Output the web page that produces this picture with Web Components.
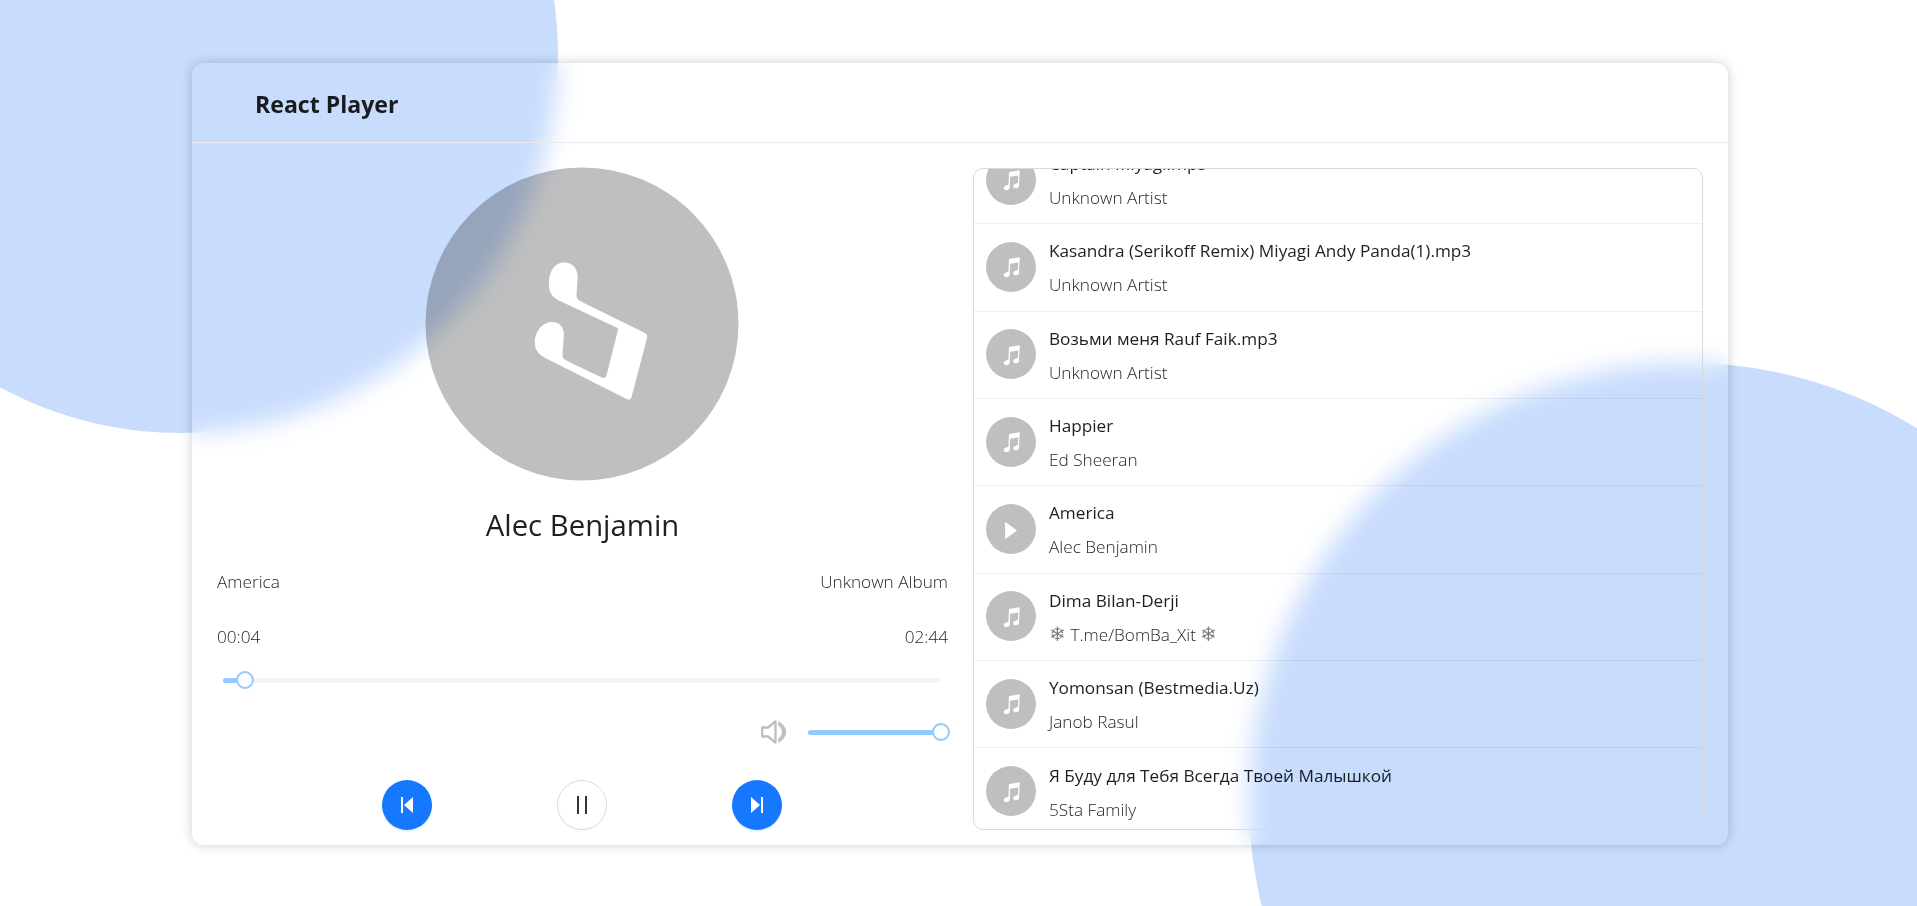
<!DOCTYPE html>
<html lang="en">
<head>
<meta charset="utf-8">
<title>React Player</title>
<style>
html, body {
  margin: 0;
  height: 100%;
  background: #fff;
}
body {
  font-family: "Open Sans", "Liberation Sans", sans-serif;
  color: rgba(0, 0, 0, 0.88);
  overflow: hidden;
}
.flake {
  opacity: 0.6;
  font-size: 1.15em;
  line-height: 0;
}
</style>
</head>
<body>
<rp-app>
  <rp-card heading="React Player">
    <rp-now-playing slot="left" artist="Alec Benjamin" song="America" album="Unknown Album" current="00:04" total="02:44"></rp-now-playing>
    <rp-playlist slot="right">
      <rp-track><span slot="title">Captain Miyagi.mp3</span><span slot="artist">Unknown Artist</span></rp-track>
      <rp-track><span slot="title">Kasandra (Serikoff Remix) Miyagi Andy Panda(1).mp3</span><span slot="artist">Unknown Artist</span></rp-track>
      <rp-track><span slot="title">Возьми меня Rauf Faik.mp3</span><span slot="artist">Unknown Artist</span></rp-track>
      <rp-track><span slot="title">Happier</span><span slot="artist">Ed Sheeran</span></rp-track>
      <rp-track playing><span slot="title">America</span><span slot="artist">Alec Benjamin</span></rp-track>
      <rp-track><span slot="title">Dima Bilan-Derji</span><span slot="artist"><span class="flake">❄</span> T.me/BomBa_Xit <span class="flake">❄</span></span></rp-track>
      <rp-track><span slot="title">Yomonsan (Bestmedia.Uz)</span><span slot="artist">Janob Rasul</span></rp-track>
      <rp-track last><span slot="title">Я Буду для Тебя Всегда Твоей Малышкой</span><span slot="artist">5Sta Family</span></rp-track>
    </rp-playlist>
  </rp-card>
</rp-app>
<script>
// the beamed note, traced from the album art at its rotated angle
const NOTE_PATH =
  "M145 130C146 90 165 68 192 68C220 68 233 90 231 118L228 165C228 174 232 180 240 184L433 279C439 282 441 287 440 292L393 472C391 479 386 481 380 478L130 352C112 342 103 328 103 308C103 275 125 246 155 246C178 246 191 262 190 285L186 345C186 353 190 358 197 362L302 412C310 416 316 414 318 407L352 272C353 267 352 265 348 263L172 180C154 171 144 155 145 130Z";

class RpApp extends HTMLElement {
  constructor() {
    super();
    this.attachShadow({ mode: "open" }).innerHTML = `
<style>
:host {
  display: block;
  position: relative;
  width: 100%;
  height: 906px;
  overflow: hidden;
  box-sizing: border-box;
  padding: 63px 189px 0 192px;
}
.blob {
  position: absolute;
  border-radius: 50%;
  background: #c8dcfd;
}
.one {
  left: -198px;
  top: -323px;
  width: 756px;
  height: 756px;
}
.two {
  left: 1249px;
  top: 363px;
  width: 876px;
  height: 876px;
}
</style>
<div class="blob one"></div>
<div class="blob two"></div>
<slot></slot>`;
  }
}
customElements.define("rp-app", RpApp);

class RpCard extends HTMLElement {
  constructor() {
    super();
    this.attachShadow({ mode: "open" }).innerHTML = `
<style>
:host {
  display: block;
  position: relative;
  height: 782px;
  border-radius: 12px;
  box-shadow: 0 0 12px rgba(0, 0, 0, 0.2);
  backdrop-filter: blur(12px);
  overflow: hidden;
}
header {
  box-sizing: border-box;
  height: 80px;
  padding: 2px 0 0 63px;
  display: flex;
  align-items: center;
  border-bottom: 1px solid #ebebeb;
  font-size: 23.1px;
  font-weight: 700;
  color: rgba(0, 0, 0, 0.88);
}
.body {
  display: grid;
  grid-template-columns: 731px 730px;
  gap: 25px;
  padding: 25px 25px 15px 25px;
}
</style>
<header>${this.getAttribute("heading")}</header>
<div class="body">
  <slot name="left"></slot>
  <slot name="right"></slot>
</div>`;
  }
}
customElements.define("rp-card", RpCard);

class RpSlider extends HTMLElement {
  constructor() {
    super();
    const value = this.getAttribute("value");
    this.attachShadow({ mode: "open" }).innerHTML = `
<style>
:host {
  display: block;
  position: relative;
  height: 18px;
}
.rail, .track {
  position: absolute;
  left: 0;
  top: 7px;
  height: 5px;
  border-radius: 3px;
}
.rail {
  width: 100%;
  background: rgba(0, 0, 0, 0.04);
}
.track {
  width: ${value}%;
  background: #91caff;
}
.handle {
  position: absolute;
  left: ${value}%;
  top: 0;
  box-sizing: border-box;
  width: 18px;
  height: 18px;
  margin-left: -9px;
  border-radius: 50%;
  border: 2.5px solid #91caff;
  background: #fff;
}
</style>
<div class="rail"></div>
<div class="track"></div>
<div class="handle"></div>`;
  }
}
customElements.define("rp-slider", RpSlider);

class RpRoundButton extends HTMLElement {
  constructor() {
    super();
    const kind = this.getAttribute("kind");
    const icons = {
      prev: `<svg width="12" height="16" viewBox="0 0 12 16"><rect x="0" y="0" width="2" height="16" fill="#fff"/><path d="M12 0V16L3 8Z" fill="#fff"/></svg>`,
      next: `<svg width="12" height="16" viewBox="0 0 12 16"><path d="M0 0V16L9 8Z" fill="#fff"/><rect x="10" y="0" width="2" height="16" fill="#fff"/></svg>`,
      pause: `<svg width="12" height="18" viewBox="0 0 12 18"><rect x="1" y="0" width="2" height="18" fill="#333"/><rect x="9" y="0" width="2" height="18" fill="#333"/></svg>`,
    };
    this.attachShadow({ mode: "open" }).innerHTML = `
<style>
:host {
  display: flex;
  align-items: center;
  justify-content: center;
  box-sizing: border-box;
  width: 50px;
  height: 50px;
  border-radius: 50%;
  background: #1677ff;
  box-shadow: 0 2px 0 rgba(5, 145, 255, 0.1);
}
:host([kind="pause"]) {
  background: #fff;
  border: 1px solid #d9d9d9;
  box-shadow: 0 2px 0 rgba(0, 0, 0, 0.02);
}
</style>
${icons[kind]}`;
  }
}
customElements.define("rp-round-button", RpRoundButton);

class RpNowPlaying extends HTMLElement {
  constructor() {
    super();
    const attr = (name) => this.getAttribute(name);
    this.attachShadow({ mode: "open" }).innerHTML = `
<style>
:host {
  display: block;
}
.album {
  width: 313px;
  height: 313px;
  margin: -1px auto 0;
  transform: translate(-0.5px, 0.4px);
  border-radius: 50%;
  background: rgba(0, 0, 0, 0.25);
}
.album svg {
  display: block;
}
h2 {
  margin: 25px 0 0;
  font-size: 29.3px;
  line-height: 40px;
  font-weight: 450;
  text-align: center;
}
.row {
  display: flex;
  justify-content: space-between;
  font-size: 17.2px;
  line-height: 24px;
  font-weight: 340;
}
.meta {
  margin-top: 25px;
}
.time {
  margin-top: 31px;
}
.progress {
  margin: 22px 7px 0 6px;
}
.volume {
  display: flex;
  align-items: center;
  justify-content: flex-end;
  gap: 21px;
  margin: 31px 7px 0 0;
}
.volume rp-slider {
  width: 133px;
}
.volume svg {
  display: block;
}
.controls {
  display: flex;
  justify-content: center;
  gap: 125px;
  margin: 36px 0 0 -1px;
}
</style>
<div class="album">
  <svg width="313" height="313" viewBox="-225 -217.5 939 939"><path d="${NOTE_PATH}" fill="#fff"/></svg>
</div>
<h2>${attr("artist")}</h2>
<div class="row meta"><span>${attr("song")}</span><span>${attr("album")}</span></div>
<div class="row time"><span>${attr("current")}</span><span>${attr("total")}</span></div>
<rp-slider class="progress" value="3.1"></rp-slider>
<div class="volume">
  <svg width="26" height="24" viewBox="0 0 26 24">
    <path d="M1.2 7.5H7L14.5 1.5V22.5L7 16.5H1.2Z" fill="none" stroke="#bfbfbf" stroke-width="2.3" stroke-linejoin="round"/>
    <path d="M17.5 1Q33 12 17.5 23L17 19Q25 12 17 5Z" fill="#bfbfbf"/>
  </svg>
  <rp-slider value="100"></rp-slider>
</div>
<div class="controls">
  <rp-round-button kind="prev"></rp-round-button>
  <rp-round-button kind="pause"></rp-round-button>
  <rp-round-button kind="next"></rp-round-button>
</div>`;
  }
}
customElements.define("rp-now-playing", RpNowPlaying);

class RpPlaylist extends HTMLElement {
  constructor() {
    super();
    this.attachShadow({ mode: "open" }).innerHTML = `
<style>
:host {
  display: block;
  box-sizing: border-box;
  height: 662px;
  border: 1px solid #d9d9d9;
  border-radius: 10px;
  overflow: hidden;
}
.inner {
  margin-top: -32px;
}
</style>
<div class="inner"><slot></slot></div>`;
  }
}
customElements.define("rp-playlist", RpPlaylist);

class RpTrack extends HTMLElement {
  constructor() {
    super();
    const icon = this.hasAttribute("playing")
      ? `<svg width="12" height="17" viewBox="0 0 12 17" style="margin-top:3px"><path d="M0.5 0.5V16.5L11.5 8.5Z" fill="#fff" stroke="#fff" stroke-width="0.8" stroke-linejoin="round"/></svg>`
      : `<svg width="27" height="27" viewBox="0 0 510 510"><path d="${NOTE_PATH}" fill="#fff" transform="rotate(-114 270 275)"/></svg>`;
    this.attachShadow({ mode: "open" }).innerHTML = `
<style>
:host {
  display: flex;
  align-items: center;
  gap: 13px;
  box-sizing: border-box;
  height: 87.33px;
  padding: 0 12px;
  border-bottom: 1px solid rgba(5, 5, 5, 0.06);
}
:host([last]) {
  border-bottom: none;
}
.avatar {
  flex: none;
  display: flex;
  align-items: center;
  justify-content: center;
  width: 50px;
  height: 50px;
  margin-bottom: 1px;
  border-radius: 50%;
  background: #bfbfbf;
}
.text {
  padding-top: 2px;
}
.title {
  font-size: 17.2px;
  line-height: 24px;
  font-weight: 450;
}
.artist {
  margin-top: 10px;
  font-size: 17.2px;
  line-height: 24px;
  font-weight: 340;
}
</style>
<div class="avatar">${icon}</div>
<div class="text">
  <div class="title"><slot name="title"></slot></div>
  <div class="artist"><slot name="artist"></slot></div>
</div>`;
  }
}
customElements.define("rp-track", RpTrack);
</script>
</body>
</html>
